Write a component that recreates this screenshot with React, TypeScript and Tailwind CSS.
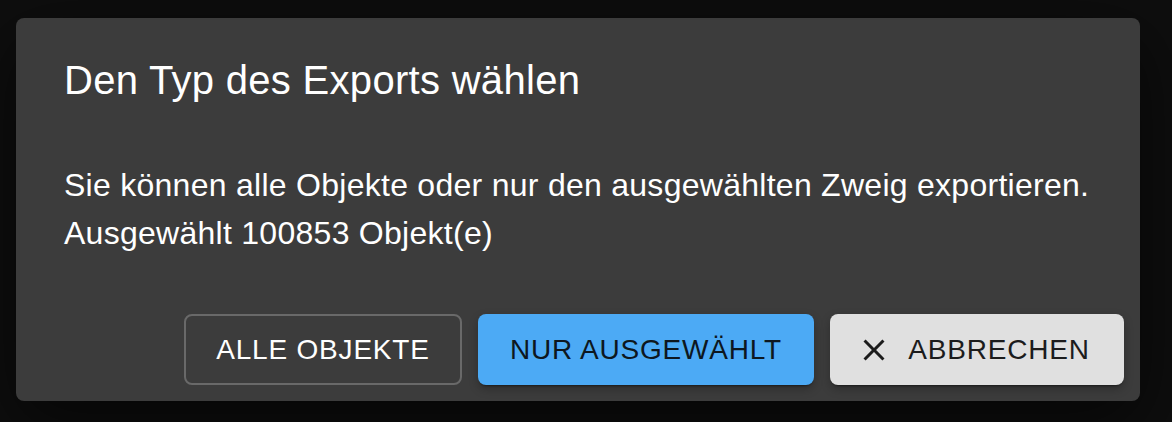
import React from 'react';

const font = { fontFamily: '"Liberation Sans", Arial, Helvetica, sans-serif' };

const CloseIcon = () => (
  <svg className="w-9 h-9" viewBox="0 0 24 24" fill="currentColor">
    <path d="M19 6.41 17.59 5 12 10.59 6.41 5 5 6.41 10.59 12 5 17.59 6.41 19 12 13.41 17.59 19 19 17.59 13.41 12z" />
  </svg>
);

const ExportDialog: React.FC = () => {
  return (
    <div className="w-[1124px] h-[383px] bg-[#3c3c3c] rounded-lg shadow-[0_22px_70px_rgba(0,0,0,0.6)] flex flex-col text-white">
      {/* Title */}
      <h2 className="pt-[30px] px-12 text-[40px] leading-[64px] tracking-[0.3px] font-normal">
        Den Typ des Exports wählen
      </h2>

      {/* Content */}
      <p className="mt-[49px] px-12 text-[32px] leading-[48px] tracking-[0.27px]">
        Sie können alle Objekte oder nur den ausgewählten Zweig exportieren.
        <br />
        Ausgewählt 100853 Objekt(e)
      </p>

      {/* Actions */}
      <div className="mt-[57px] pr-4 flex justify-end gap-4">
        <button className="w-[278px] h-[71px] rounded-lg border-2 border-[#696969] text-white text-[28px] tracking-[0.8px] uppercase flex items-center justify-center">
          Alle Objekte
        </button>
        <button className="w-[336px] h-[71px] rounded-lg bg-[#4caaf5] text-[#0d1720] text-[28px] tracking-[0.8px] uppercase flex items-center justify-center shadow-[0_3px_2px_-2px_rgba(0,0,0,0.4),0_4px_10px_rgba(0,0,0,0.25)]">
          Nur ausgewählt
        </button>
        <button className="w-[294px] h-[71px] rounded-lg bg-[#e0e0e0] text-[#1c1c1c] text-[28px] tracking-[0.8px] uppercase flex items-center justify-center shadow-[0_3px_2px_-2px_rgba(0,0,0,0.4),0_4px_10px_rgba(0,0,0,0.25)]">
          <span className="-ml-2 mr-4 flex">
            <CloseIcon />
          </span>
          Abbrechen
        </button>
      </div>
    </div>
  );
};

export default function App() {
  return (
    <div className="w-[1172px] h-[422px] bg-[#0e0e0e] pl-4 pt-[18px] overflow-hidden" style={font}>
      <ExportDialog />
    </div>
  );
}
